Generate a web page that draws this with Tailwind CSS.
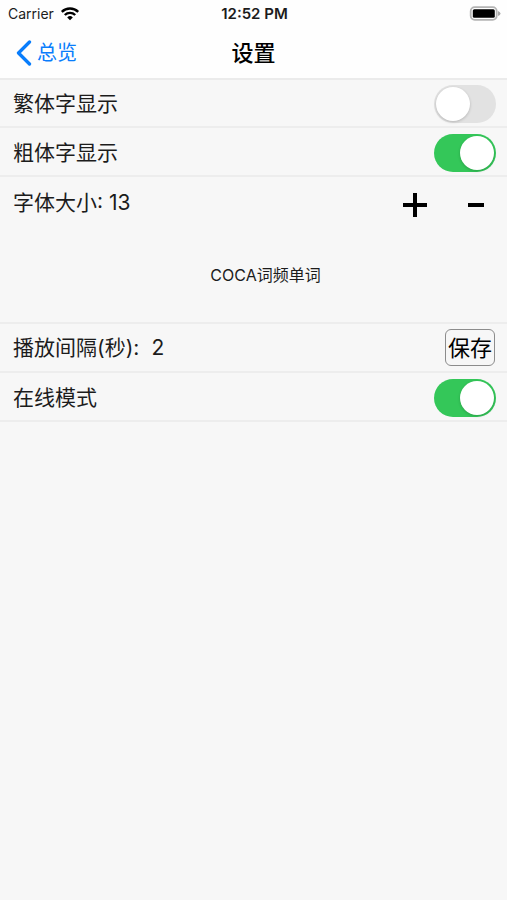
<!DOCTYPE html>
<html lang="zh-CN">
<head>
<meta charset="utf-8">
<meta name="viewport" content="width=device-width, initial-scale=1">
<title>设置</title>
<script src="https://cdn.jsdelivr.net/npm/@tailwindcss/browser@4"></script>
</head>
<body class="min-h-screen bg-[#f7f7f7] font-[Inter,'Noto_Sans_CJK_SC',sans-serif] text-[21px] leading-7 text-[#1c1c1c]">
<header class="border-b-2 border-[#ebebeb] bg-[#fefefe]">
  <div class="grid h-7 grid-cols-3 items-center pr-1.5 pl-2 text-[14px] leading-5">
    <div class="flex items-center gap-1.5">
      <span>Carrier</span>
      <svg class="h-[14px] w-5" viewBox="0 0 19 14" aria-label="Wi-Fi">
        <path d="M9.500 13.300 L6.700 10.400 A4 4 0 0 1 12.300 10.400 Z" fill="#000"/>
        <path d="M4.300 8 A7.400 7.400 0 0 1 14.700 8 M1.300 4.900 A11.700 11.700 0 0 1 17.700 4.900" fill="none" stroke="#000" stroke-width="2.400"/>
      </svg>
    </div>
    <div class="text-center text-[15px] font-semibold">12:52 PM</div>
    <svg class="h-4 w-8 justify-self-end" viewBox="0 0 32 16" aria-label="电池">
      <rect x="1.700" y="1.200" width="26" height="12.600" rx="4" fill="#fff" stroke="#b4b4b4" stroke-width="1.800"/>
      <rect x="3.800" y="3.200" width="22" height="8.600" rx="1.500" fill="#000"/>
      <path d="M29 5 Q31.500 6 31.500 7.500 Q31.500 9 29 10 Z" fill="#aaa"/>
    </svg>
  </div>
  <nav class="grid h-[50px] grid-cols-3 items-center px-4">
    <a href="#" class="flex items-center gap-[5px] text-[20px] text-[#087dfc]">
      <svg class="h-[26px] w-4" viewBox="0 0 16 26" aria-hidden="true"><path d="M13.500 2 L2.500 13 L13.500 24" fill="none" stroke="currentColor" stroke-width="3.300" stroke-linecap="round" stroke-linejoin="round"/></svg>
      <span>总览</span>
    </a>
    <h1 class="text-center text-[22px] font-medium text-black">设置</h1>
  </nav>
</header>
<main>
  <div class="flex h-12 items-center justify-between border-b-2 border-[#ededed] pt-0.5 pr-[11px] pl-[13px]">
    <label for="trad">繁体字显示</label>
    <input id="trad" type="checkbox" class="h-[38px] w-[62px] appearance-none rounded-full bg-[#e2e2e2] p-0.5 before:block before:size-[34px] before:rounded-full before:bg-white before:shadow-[0_1px_3px_rgba(0,0,0,0.2)] checked:bg-[#34c759] checked:before:ml-6">
  </div>
  <div class="flex h-[49px] items-center justify-between border-b-2 border-[#ededed] pt-0.5 pr-[11px] pl-[13px]">
    <label for="bold">粗体字显示</label>
    <input id="bold" type="checkbox" checked class="h-[38px] w-[62px] appearance-none rounded-full bg-[#e2e2e2] p-0.5 before:block before:size-[34px] before:rounded-full before:bg-white before:shadow-[0_1px_3px_rgba(0,0,0,0.2)] checked:bg-[#34c759] checked:before:ml-6">
  </div>
  <section class="h-[147px] border-b-2 border-[#ededed]">
    <div class="flex h-[51px] items-center justify-between pr-[11px] pl-[13px]">
      <span>字体大小: 13</span>
      <div class="flex items-center gap-[21px] pt-1 text-black">
        <button type="button" aria-label="增大" class="flex size-10 items-center justify-center"><svg class="size-6" viewBox="0 0 24 24"><path d="M0 12H24M12 0V24" stroke="currentColor" stroke-width="4"/></svg></button>
        <button type="button" aria-label="减小" class="flex size-10 items-center justify-center"><svg class="size-6" viewBox="0 0 24 24"><path d="M4 12H20" stroke="currentColor" stroke-width="4"/></svg></button>
      </div>
    </div>
    <p class="pt-[33px] pl-6 text-center text-[16px]">COCA词频单词</p>
  </section>
  <div class="flex h-[49px] items-center border-b-2 border-[#ededed] pr-3 pl-[13px]">
    <label for="gap">播放间隔(秒):</label>
    <input id="gap" type="text" inputmode="numeric" value="2" class="ml-3 min-w-0 flex-1 bg-transparent">
    <button type="button" class="h-[37px] w-[50px] rounded-md border border-[#8c8c8c] text-[22px] text-black">保存</button>
  </div>
  <div class="flex h-[49px] items-center justify-between border-b-2 border-[#ededed] pt-0.5 pr-[11px] pl-[13px]">
    <label for="online">在线模式</label>
    <input id="online" type="checkbox" checked class="h-[38px] w-[62px] appearance-none rounded-full bg-[#e2e2e2] p-0.5 before:block before:size-[34px] before:rounded-full before:bg-white before:shadow-[0_1px_3px_rgba(0,0,0,0.2)] checked:bg-[#34c759] checked:before:ml-6">
  </div>
</main>
</body>
</html>
